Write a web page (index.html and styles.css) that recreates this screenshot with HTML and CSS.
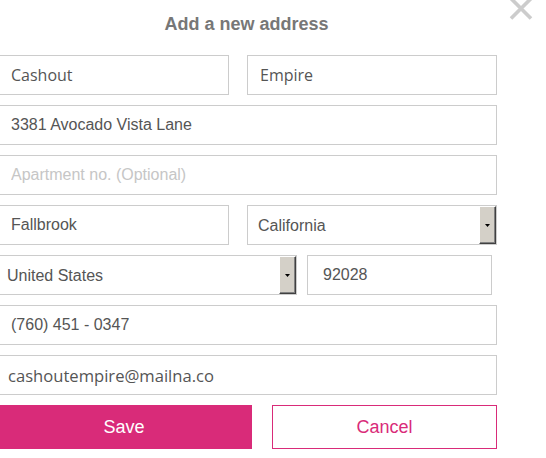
FILE: index.html
```html
<!DOCTYPE html>
<html>
<head>
<meta charset="utf-8">
<title>Add a new address</title>
<link rel="stylesheet" href="styles.css">
</head>
<body>
<div class="modal">
  <button class="close" type="button" aria-label="Close">
    <svg width="26" height="24" viewBox="0 0 26 24"><path d="M3 1.5 L23 21.5 M23 1.5 L3 21.5" stroke="#cccccc" stroke-width="3.6" fill="none"/></svg>
  </button>
  <form class="form">
    <h2 class="title">Add a new address</h2>
    <div class="row row-name">
      <input class="field sans" type="text" value="Cashout">
      <input class="field sans pad-l" type="text" value="Empire">
    </div>
    <input class="field" type="text" value="3381 Avocado Vista Lane">
    <input class="field" type="text" placeholder="Apartment no. (Optional)">
    <div class="row row-name">
      <input class="field" type="text" value="Fallbrook">
      <div class="select">
        <select class="select-input pad-l"><option>California</option></select>
        <span class="select-btn"><svg width="5" height="3" viewBox="0 0 5 3"><path d="M0 0 H5 L2.5 3 Z" fill="#000"/></svg></span>
      </div>
    </div>
    <div class="row row-country">
      <div class="select">
        <select class="select-input pad-s"><option>United States</option></select>
        <span class="select-btn"><svg width="5" height="3" viewBox="0 0 5 3"><path d="M0 0 H5 L2.5 3 Z" fill="#000"/></svg></span>
      </div>
      <input class="field zip" type="text" value="92028">
    </div>
    <input class="field" type="text" value="(760) 451 - 0347">
    <input class="field sans email pad-s" type="text" value="cashoutempire@mailna.co">
    <div class="row row-buttons">
      <button class="btn btn-save" type="button">Save</button>
      <button class="btn btn-cancel" type="button">Cancel</button>
    </div>
  </form>
</div>
</body>
</html>
```

FILE: styles.css
```css
* { box-sizing: border-box; }
html, body {
  margin: 0;
  padding: 0;
  background: #fff;
  overflow: hidden;
}
body {
  width: 546px;
  height: 458px;
  font-family: "Liberation Sans", Arial, sans-serif;
}
.modal {
  position: relative;
  width: 546px;
  height: 458px;
}
.close {
  position: absolute;
  left: 508px;
  top: -3px;
  width: 26px;
  height: 24px;
  padding: 0;
  border: 0;
  background: transparent;
  display: block;
}
.close svg { display: block; }
.form {
  margin: 0 0 0 -4px;
  width: 501px;
  display: flex;
  flex-direction: column;
  gap: 10px;
}
.title {
  margin: 0 0 11px 0;
  padding-top: 14px;
  height: 34px;
  font-size: 18px;
  line-height: 20px;
  font-weight: bold;
  color: #777777;
  text-align: center;
}
.row {
  display: grid;
}
.row-name {
  grid-template-columns: 233px 250px;
  column-gap: 18px;
}
.row-country {
  grid-template-columns: 301px 185px;
  column-gap: 10px;
}
.row-buttons {
  grid-template-columns: 256px 225px;
  column-gap: 20px;
}
.field {
  display: block;
  width: 100%;
  height: 40px;
  margin: 0;
  padding: 0 10px 0 14px;
  border: 1px solid #cccccc;
  border-radius: 0;
  background: #fff;
  font-family: "Liberation Sans", Arial, sans-serif;
  font-size: 16px;
  color: #555;
  outline: none;
}
.field::placeholder {
  color: #c6c6c6;
  opacity: 1;
}
.field.sans {
  font-family: "Open Sans", "Noto Sans", sans-serif;
}
.field.pad-l { padding-left: 12px; }
.field.pad-s { padding-left: 11px; }
.field.email { font-size: 16.6px; }
.field.zip { padding-left: 15px; }
.select {
  display: flex;
  height: 40px;
  border: 1px solid #cccccc;
  background: #fff;
}
.select-input {
  flex: 1;
  min-width: 0;
  height: 38px;
  margin: 0;
  border: 0;
  background: transparent;
  appearance: none;
  -webkit-appearance: none;
  font-family: "Liberation Sans", Arial, sans-serif;
  font-size: 16px;
  color: #555;
  outline: none;
}
.select-input.pad-l { padding: 0 0 0 10px; }
.select-input.pad-s { padding: 0 0 0 10px; }
.select-btn {
  width: 17px;
  height: 38px;
  background: #d4d0c8;
  border-style: solid;
  border-width: 1px;
  border-color: #ffffff #404040 #404040 #ffffff;
  box-shadow: inset -1px -1px 0 #808080;
  display: flex;
  align-items: center;
  justify-content: center;
}
.select-btn svg { display: block; }
.btn {
  height: 44px;
  margin: 0;
  padding: 0;
  border-radius: 0;
  font-family: "Liberation Sans", Arial, sans-serif;
  font-size: 18px;
  cursor: pointer;
}
.btn-save {
  background: #d92b79;
  border: 1px solid #d92b79;
  color: #fff;
}
.btn-cancel {
  background: #fff;
  border: 1px solid #d92b79;
  color: #d92b79;
}
```
